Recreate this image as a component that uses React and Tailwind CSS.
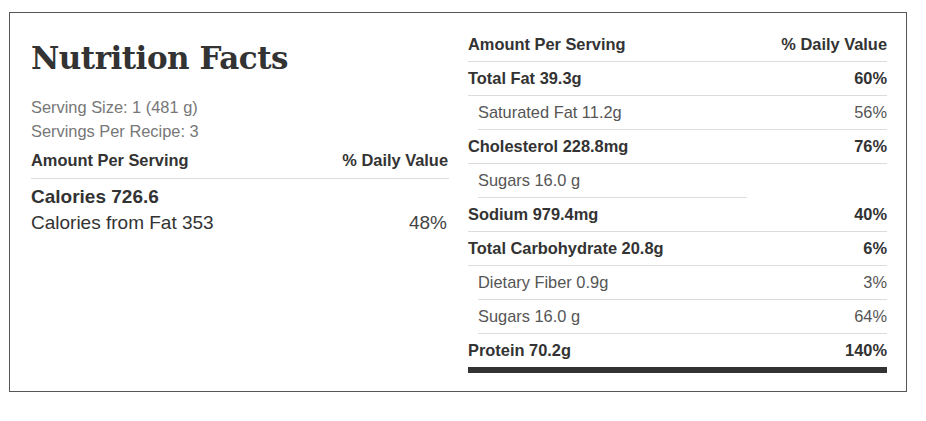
import React from "react";

const rows = [
  { label: "Total Fat 39.3g", pct: "60%", bold: true },
  { label: "Saturated Fat 11.2g", pct: "56%" },
  { label: "Cholesterol 228.8mg", pct: "76%", bold: true },
  { label: "Sugars 16.0 g", pct: "", short: true },
  { label: "Sodium 979.4mg", pct: "40%", bold: true },
  { label: "Total Carbohydrate 20.8g", pct: "6%", bold: true },
  { label: "Dietary Fiber 0.9g", pct: "3%" },
  { label: "Sugars 16.0 g", pct: "64%" },
];

function Row({ label, pct, bold, short }) {
  if (bold) {
    return (
      <div className="h-[34px] flex items-center justify-between border-b border-[#dcdcdc] font-bold text-[#333]">
        <span>{label}</span>
        <span>{pct}</span>
      </div>
    );
  }
  return (
    <div
      className={`h-[34px] ml-[10px] flex items-center justify-between border-b border-[#dcdcdc] text-[#555] ${
        short ? "w-[269px]" : ""
      }`}
    >
      <span>{label}</span>
      <span>{pct}</span>
    </div>
  );
}

export default function App() {
  return (
    <div className="min-h-screen bg-white pt-[12px] pl-[9px] font-['Liberation_Sans',Arial,sans-serif] text-[16.4px]">
      <div className="w-[898px] h-[380px] border border-[#555] flex gap-[19px] pl-[21px] pt-[15px]">
        {/* left column */}
        <div className="w-[418px]">
          <h1 className="mt-[15px] font-['DejaVu_Serif',serif] font-bold text-[31px] leading-[31px] tracking-[-0.5px] text-[#333]">
            Nutrition Facts
          </h1>
          <div className="mt-[21px] text-[#777] leading-[24px]">
            <div>Serving Size: 1 (481 g)</div>
            <div>Servings Per Recipe: 3</div>
          </div>
          <div className="pt-[5px] pb-[6px] leading-[24px] flex justify-between border-b border-[#dcdcdc] font-bold text-[#333]">
            <span>Amount Per Serving</span>
            <span className="pr-[1px]">% Daily Value</span>
          </div>
          <div className="mt-[5px] text-[19px] leading-[26px] text-[#333]">
            <div className="font-bold">Calories 726.6</div>
            <div className="flex justify-between">
              <span>Calories from Fat 353</span>
              <span className="pr-[2px] text-[#444]">48%</span>
            </div>
          </div>
        </div>

        {/* right column */}
        <div className="w-[419px]">
          <div className="h-[34px] flex items-center justify-between border-b border-[#dcdcdc] font-bold text-[#333]">
            <span>Amount Per Serving</span>
            <span>% Daily Value</span>
          </div>
          {rows.map((r, i) => (
            <Row key={i} {...r} />
          ))}
          <div className="h-[33px] flex items-center justify-between font-bold text-[#333]">
            <span>Protein 70.2g</span>
            <span>140%</span>
          </div>
          <div className="h-[6px] bg-[#333]" />
        </div>
      </div>
    </div>
  );
}
